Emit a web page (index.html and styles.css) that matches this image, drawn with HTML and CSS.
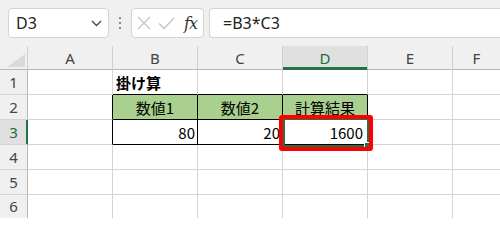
FILE: index.html
```html
<!DOCTYPE html>
<html lang="ja">
<head>
<meta charset="utf-8">
<link rel="stylesheet" href="styles.css">
</head>
<body>
<div class="top">
  <div class="namebox">
    <span class="name">D3</span>
    <svg class="chev" width="11" height="7" viewBox="0 0 11 7"><path d="M1 1 L5.5 5.5 L10 1" fill="none" stroke="#444" stroke-width="1.3"/></svg>
  </div>
  <div class="dots"><i></i><i></i><i></i></div>
  <div class="fxbox">
    <svg class="ico" width="14" height="14" viewBox="0 0 14 14"><path d="M1 1 L13 13 M13 1 L1 13" stroke="#c4c4c4" stroke-width="1.3" fill="none"/></svg>
    <svg class="ico" width="17" height="13" viewBox="0 0 17 13"><path d="M1 6.5 L6 11.5 L16 1" stroke="#c4c4c4" stroke-width="1.3" fill="none"/></svg>
    <span class="fx">fx</span>
  </div>
  <div class="formula">=B3*C3</div>
</div>
<div class="grid">
  <div class="corner"><svg width="18" height="13" viewBox="0 0 18 13"><path d="M18 0 L18 13 L0 13 Z" fill="#dadada"/></svg></div>
  <div class="ch">A</div>
  <div class="ch">B</div>
  <div class="ch">C</div>
  <div class="ch sel">D</div>
  <div class="ch">E</div>
  <div class="ch last">F</div>

  <div class="rh">1</div>
  <div class="c"></div>
  <div class="c bb title">掛け算</div>
  <div class="c bb"></div>
  <div class="c bb"></div>
  <div class="c"></div>
  <div class="c last"></div>

  <div class="rh">2</div>
  <div class="c br"></div>
  <div class="c tb hd">数値1</div>
  <div class="c tb hd">数値2</div>
  <div class="c tb hd">計算結果</div>
  <div class="c"></div>
  <div class="c last"></div>

  <div class="rh rsel">3</div>
  <div class="c br"></div>
  <div class="c tb num">80</div>
  <div class="c tb num">20</div>
  <div class="c tb num active">1600<span class="selbox"><span class="handle"></span></span><span class="redbox"></span></div>
  <div class="c"></div>
  <div class="c last"></div>

  <div class="rh">4</div>
  <div class="c"></div><div class="c"></div><div class="c"></div><div class="c"></div><div class="c"></div><div class="c last"></div>

  <div class="rh">5</div>
  <div class="c"></div><div class="c"></div><div class="c"></div><div class="c"></div><div class="c"></div><div class="c last"></div>

  <div class="rh end">6</div>
  <div class="c end"></div><div class="c end"></div><div class="c end"></div><div class="c end"></div><div class="c end"></div><div class="c end last"></div>
</div>
</body>
</html>
```

FILE: styles.css
```css
* { box-sizing: border-box; }
html, body { margin: 0; padding: 0; }
html { background: #fff; }
body {
  width: 500px;
  background: #f0f0f0;
  font-family: "Noto Sans", "Noto Sans CJK JP", sans-serif;
  color: #222;
}
.top {
  height: 46px;
  display: flex;
  align-items: flex-start;
  padding: 8px 0 0 8px;
}
.namebox {
  width: 101px;
  height: 30px;
  background: #fff;
  border: 1px solid #d4d4d4;
  border-radius: 4px;
  display: flex;
  align-items: center;
  justify-content: space-between;
  padding: 0 6px 0 7px;
}
.name { font-size: 16px; color: #222; }
.chev { margin-top: 1px; }
.dots {
  width: 22px;
  height: 30px;
  display: flex;
  flex-direction: column;
  align-items: center;
  justify-content: center;
  gap: 3px;
}
.dots i {
  display: block;
  width: 2px;
  height: 2px;
  background: #8a8a8a;
}
.fxbox {
  width: 73px;
  height: 30px;
  background: #fff;
  border: 1px solid #d4d4d4;
  border-radius: 4px;
  display: flex;
  align-items: center;
  padding: 0 4px 0 5px;
  gap: 7px;
}
.fx {
  font-family: "DejaVu Serif", "Liberation Serif", serif;
  font-style: italic;
  font-size: 16px;
  color: #333;
  margin-left: 2px;
  letter-spacing: -1px;
}
.formula {
  flex: 1;
  height: 30px;
  margin-left: 5px;
  background: #fff;
  border: 1px solid #d4d4d4;
  border-right: none;
  border-radius: 4px 0 0 4px;
  display: flex;
  align-items: center;
  padding-left: 13px;
  font-size: 16px;
  color: #222;
}
.grid {
  height: 172px;
  display: grid;
  grid-template-columns: 28px repeat(5, 85px) 1fr;
  grid-template-rows: 24px repeat(5, 25px) 1fr;
}
.corner {
  background: #f0f0f0;
  border-right: 1px solid #d0d0d0;
  border-bottom: 1px solid #b8b8b8;
  display: flex;
  align-items: flex-end;
  justify-content: flex-end;
  padding: 0 2px 2px 0;
}
.corner svg { display: block; }
.ch {
  background: #f0f0f0;
  border-right: 1px solid #d0d0d0;
  border-bottom: 1px solid #b8b8b8;
  display: flex;
  align-items: center;
  justify-content: center;
  font-size: 15px;
  color: #444;
}
.ch.sel {
  background: #e0e0e0;
  color: #1d6b40;
  border-bottom-color: #217346;
  box-shadow: inset 0 -2px 0 #217346;
}
.rh {
  background: #f0f0f0;
  border-right: 1px solid #b8b8b8;
  border-bottom: 1px solid #d4d4d4;
  display: flex;
  align-items: center;
  justify-content: center;
  font-size: 15px;
  color: #444;
}
.rh.end { align-items: flex-start; padding-top: 1px; }
.rh.rsel {
  background: #e0e0e0;
  color: #1d6b40;
  border-right-color: #217346;
  box-shadow: inset -1px 0 0 #217346;
}
.c {
  background: #fff;
  border-right: 1px solid #d4d4d4;
  border-bottom: 1px solid #d4d4d4;
  display: flex;
  align-items: center;
  font-family: "Noto Sans CJK JP", sans-serif;
  font-size: 15px;
  color: #000;
}
.end { border-bottom: none; }
.c.last, .ch.last { border-right: none; }
.c.bb { border-bottom-color: #000; }
.c.br { border-right-color: #000; }
.c.tb { border-right-color: #000; border-bottom-color: #000; }
.title { font-weight: bold; padding-left: 3px; }
.hd { background: #a9d08e; justify-content: center; }
.num { justify-content: flex-end; padding-right: 2px; }
.active {
  padding-right: 4px;
  position: relative;
  z-index: 2;
}
.selbox {
  position: absolute;
  left: 0;
  top: -2px;
  width: 86px;
  height: 29px;
  border: 2px solid #217346;
}
.handle {
  position: absolute;
  right: -3px;
  bottom: -3px;
  width: 6px;
  height: 6px;
  background: #217346;
  border-top: 1px solid #fff;
  border-left: 1px solid #fff;
}
.redbox {
  position: absolute;
  left: -4px;
  top: -5px;
  width: 94px;
  height: 36px;
  border: 4px solid #ff0000;
  border-radius: 3px;
}
```
